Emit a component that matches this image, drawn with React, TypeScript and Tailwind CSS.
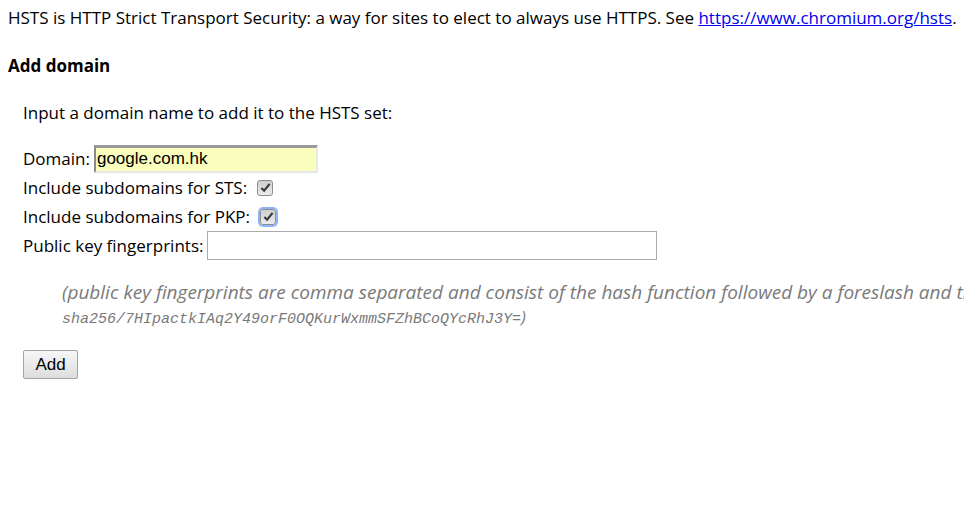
import React from "react";

function Check({ focused = false }: { focused?: boolean }) {
  return (
    <span
      className={
        "inline-flex items-center justify-center rounded-[3px] " +
        (focused ? "ring-2 ring-[#8fb4f5] ring-offset-0" : "")
      }
    >
      <span className="flex h-[16px] w-[16px] items-center justify-center rounded-[3px] border border-[#8e8e8e] bg-gradient-to-b from-[#cfcfcf] to-[#ececec]">
        <svg viewBox="0 0 12 12" className="h-[11px] w-[11px]">
          <path d="M1.5 6.5 L4.5 9.5 L10.5 2" fill="none" stroke="#3a3a3a" strokeWidth="2.4" />
        </svg>
      </span>
    </span>
  );
}

export default function App() {
  const body = { fontFamily: '"Open Sans", "Noto Sans", sans-serif' };

  return (
    <div className="h-[506px] w-[964px] overflow-hidden bg-white text-[17px] text-black" style={body}>
      <p className="px-2 pt-[7px] leading-[22px] whitespace-nowrap">
        HSTS is HTTP Strict Transport Security: a way for sites to elect to always use HTTPS. See{" "}
        <a href="#" className="text-[#0000ee] underline">
          https://www.chromium.org/hsts
        </a>
        .
      </p>

      <h4 className="mt-[26px] px-2 text-[17px] font-bold leading-[22px]">Add domain</h4>

      <div className="mt-[25px] pl-[23px]">
        <p className="leading-[22px]">Input a domain name to add it to the HSTS set:</p>

        <div className="mt-[20px] flex flex-col">
          <div className="flex h-[29px] items-center gap-[4px]">
            <span>Domain:</span>
            <span
              className="flex h-[28px] w-[224px] items-center border-t-[3px] border-l-[2px] border-r-[2px] border-b-[2px] border-t-[#9a9a9a] border-l-[#8a8a8a] border-r-[#e8e8e8] border-b-[#e8e8e8] bg-[#fafebd] pl-[1px] text-[17px]"
              style={{ fontFamily: '"Liberation Sans", Arial, sans-serif' }}
            >
              google.com.hk
            </span>
          </div>
          <div className="flex h-[29px] items-center gap-[10px]">
            <span>Include subdomains for STS:</span>
            <Check />
          </div>
          <div className="flex h-[29px] items-center gap-[10px]">
            <span>Include subdomains for PKP:</span>
            <Check focused />
          </div>
          <div className="flex h-[29px] items-center gap-[4px]">
            <span>Public key fingerprints:</span>
            <span className="h-[29px] w-[450px] border border-[#a9a9a9] bg-white" />
          </div>
        </div>

        <div className="mt-[19px] pl-[39px] text-[#7a7a7a] italic whitespace-nowrap">
          <p className="text-[19px] leading-[26px]">
            (public key fingerprints are comma separated and consist of the hash function followed by a foreslash and the base64 encoded fingerprint, for example
          </p>
          <p className="leading-[24px]">
            <span className="text-[15px]" style={{ fontFamily: '"Liberation Mono", monospace' }}>
              sha256/7HIpactkIAq2Y49orF0OQKurWxmmSFZhBCoQYcRhJ3Y=
            </span>
            )
          </p>
        </div>

        <button
          className="mt-[18px] h-[29px] w-[55px] rounded-[2px] border border-[#a3a3a3] bg-gradient-to-b from-[#f7f7f7] to-[#dddddd] text-[17px] leading-none text-black"
          style={{ fontFamily: '"Liberation Sans", Arial, sans-serif' }}
        >
          Add
        </button>
      </div>
    </div>
  );
}
